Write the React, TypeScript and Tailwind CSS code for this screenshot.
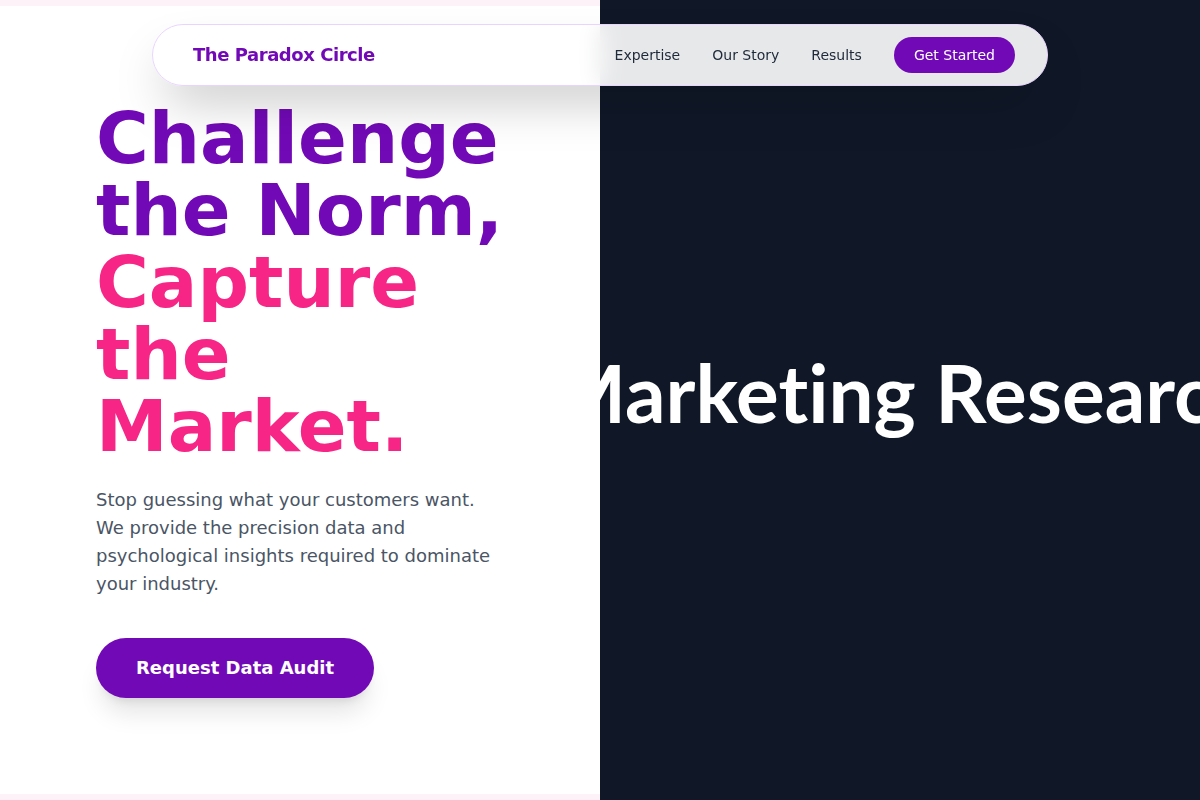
import React from "react";

const navLinks = ["Expertise", "Our Story", "Results"];

function Navbar() {
  return (
    <nav className="absolute top-6 left-1/2 z-20 w-full max-w-4xl -translate-x-1/2 rounded-full border border-purple-200 bg-white/90 py-3 pl-10 pr-8 shadow-2xl backdrop-blur-md">
      <div className="flex items-center justify-between">
        <a href="#" className="text-lg font-bold tracking-tight text-[#7209b7]">
          The Paradox Circle
        </a>
        <div className="flex items-center gap-8 text-sm text-gray-800">
          {navLinks.map((link) => (
            <a key={link} href="#">
              {link}
            </a>
          ))}
          <button className="h-9 rounded-full bg-[#7209b7] px-5 text-sm text-white">
            Get Started
          </button>
        </div>
      </div>
    </nav>
  );
}

export default function App() {
  return (
    <div
      className="relative grid h-screen grid-cols-2 overflow-hidden"
      style={{ fontFamily: '"DejaVu Sans", sans-serif' }}
    >
      <Navbar />
      <section className="flex items-center border-y-[6px] border-pink-50 bg-white px-24">
        <div>
          <h1 className="text-7xl leading-none font-bold">
            <span className="text-[#7209b7]">Challenge the Norm,</span>{" "}
            <span className="text-[#f72585]">Capture the Market.</span>
          </h1>
          <p className="mt-6 text-lg leading-7 text-gray-600">
            Stop guessing what your customers want. We provide the precision
            data and psychological insights required to dominate your industry.
          </p>
          <button className="mt-10 h-[60px] rounded-full bg-[#7209b7] px-10 text-lg font-bold text-white shadow-xl">
            Request Data Audit
          </button>
        </div>
      </section>
      <section className="flex items-center justify-center overflow-hidden bg-gray-900">
        {/* marquee frame, frozen */}
        <div
          className="-mt-4 ml-2 whitespace-nowrap text-[80px] leading-none font-bold text-white [font-variant-ligatures:none]"
          style={{ fontFamily: "Lato, sans-serif" }}
        >
          Marketing Research
        </div>
      </section>
    </div>
  );
}
